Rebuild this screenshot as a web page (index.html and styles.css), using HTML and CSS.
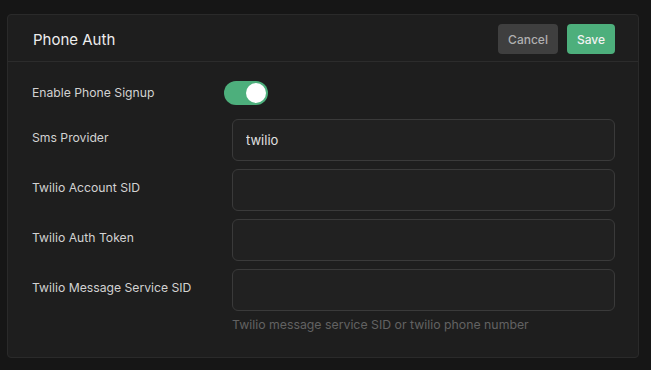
FILE: index.html
```html
<!DOCTYPE html>
<html lang="en">
<head>
    <meta charset="UTF-8">
    <title>Phone Auth</title>
    <link rel="stylesheet" href="styles.css">
</head>
<body>
    <section class="panel">
        <header class="panel-header">
            <h2>Phone Auth</h2>
            <div class="actions">
                <button class="button secondary">Cancel</button>
                <button class="button primary">Save</button>
            </div>
        </header>

        <form class="panel-body">
            <div class="toggle-row">
                <label class="field-label">Enable Phone Signup</label>
                <span class="toggle"><span class="knob"></span></span>
            </div>

            <div class="form-row">
                <label class="field-label" for="provider">Sms Provider</label>
                <div class="field">
                    <input type="text" id="provider" value="twilio">
                </div>
            </div>

            <div class="form-row">
                <label class="field-label" for="account_sid">Twilio Account SID</label>
                <div class="field">
                    <input type="text" id="account_sid">
                </div>
            </div>

            <div class="form-row">
                <label class="field-label" for="auth_token">Twilio Auth Token</label>
                <div class="field">
                    <input type="text" id="auth_token">
                </div>
            </div>

            <div class="form-row">
                <label class="field-label" for="service_sid">Twilio Message Service SID</label>
                <div class="field">
                    <input type="text" id="service_sid">
                    <p class="hint">Twilio message service SID or twilio phone number</p>
                </div>
            </div>
        </form>
    </section>
</body>
</html>
```

FILE: styles.css
```css
body {
    margin: 0;
    padding: 14px 12px 0 7px;
    background-color: #161616;
    font-family: Inter, "Noto Sans", sans-serif;
    color: #d6d6d6;
}
.panel {
    background-color: #1e1e1e;
    border: 1px solid #2a2a2a;
    border-radius: 4px;
    height: 342px;
    box-sizing: content-box;
}
.panel-header {
    display: flex;
    align-items: center;
    justify-content: space-between;
    padding: 9px 23px 7px 25px;
    border-bottom: 1px solid #2c2c2c;
}
.panel-header h2 {
    margin: 0;
    font-size: 15px;
    font-weight: 400;
    color: #ededed;
}
.actions {
    display: flex;
    gap: 9px;
}
.button {
    height: 30px;
    border: none;
    border-radius: 4px;
    font-family: inherit;
    font-size: 12px;
    font-weight: 500;
    cursor: pointer;
}
.button.secondary {
    width: 60px;
    background-color: #3f3f3f;
    color: #b0b0b0;
}
.button.primary {
    width: 48px;
    background-color: #4daf7c;
    color: #f2f2f2;
}
.panel-body {
    padding: 19px 23px 0 24px;
}
.field-label {
    width: 200px;
    flex-shrink: 0;
    font-size: 12.2px;
    line-height: 20px;
    color: #d2d2d2;
}
.toggle-row {
    display: flex;
    align-items: center;
    height: 24px;
    margin-bottom: 14px;
}
.toggle-row .field-label {
    width: 192px;
}
.toggle {
    display: flex;
    justify-content: flex-end;
    align-items: center;
    width: 44px;
    height: 24px;
    padding: 2px;
    box-sizing: border-box;
    border-radius: 12px;
    background-color: #4daf7c;
}
.knob {
    width: 20px;
    height: 20px;
    border-radius: 50%;
    background-color: #fff;
}
.form-row {
    display: flex;
    align-items: flex-start;
    margin-bottom: 8px;
}
.form-row .field-label {
    padding-top: 9px;
}
.field {
    flex: 1;
}
.field input {
    display: block;
    width: 100%;
    height: 42px;
    box-sizing: border-box;
    padding: 0 13px;
    background-color: #212121;
    border: 1px solid #3a3a3a;
    border-radius: 6px;
    font-family: inherit;
    font-size: 13px;
    color: #e0e0e0;
    outline: none;
}
.hint {
    margin: 6px 0 0;
    font-size: 12.3px;
    line-height: 16px;
    color: #626262;
}
```
